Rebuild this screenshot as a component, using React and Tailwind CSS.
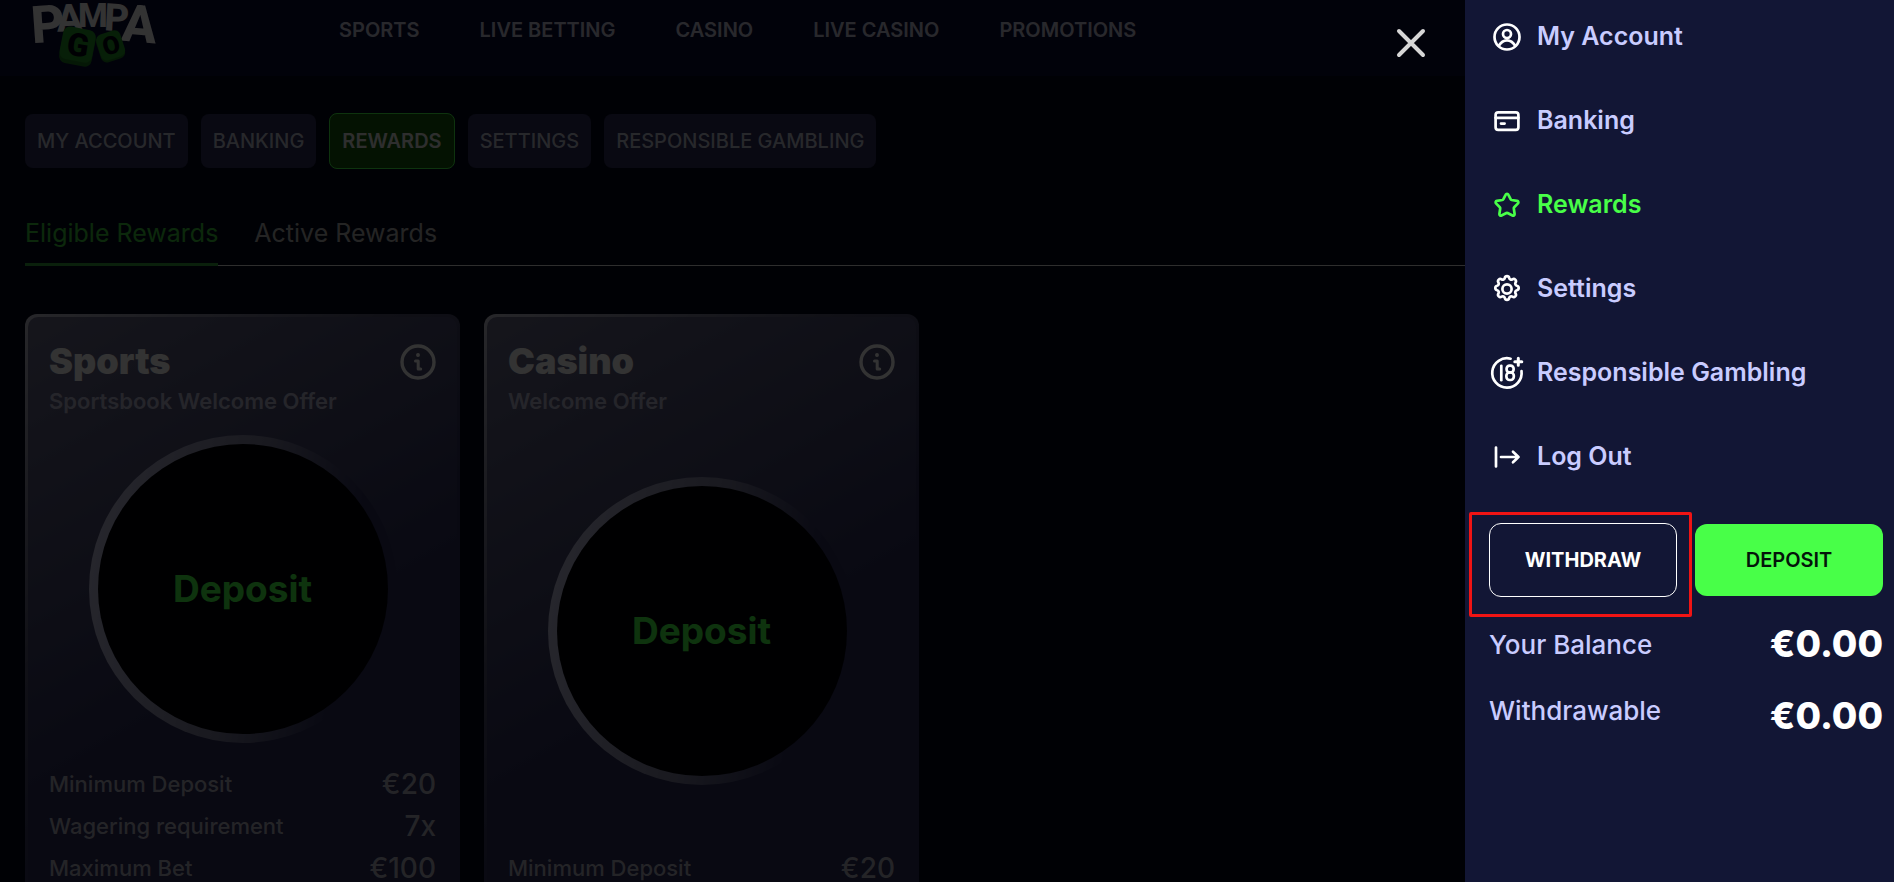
import React from 'react';

const NAV_LINKS = ['SPORTS', 'LIVE BETTING', 'CASINO', 'LIVE CASINO', 'PROMOTIONS'];

const ACCOUNT_TABS = ['MY ACCOUNT', 'BANKING', 'REWARDS', 'SETTINGS', 'RESPONSIBLE GAMBLING'];

const REWARDS = [
  {
    title: 'Sports',
    subtitle: 'Sportsbook Welcome Offer',
    rows: [
      ['Minimum Deposit', '€20'],
      ['Wagering requirement', '7x'],
      ['Maximum Bet', '€100'],
    ],
  },
  {
    title: 'Casino',
    subtitle: 'Welcome Offer',
    rows: [['Minimum Deposit', '€20']],
  },
];

const Icon = ({ children, className = 'size-9' }) => (
  <svg
    viewBox="0 0 36 36"
    className={className}
    fill="none"
    stroke="currentColor"
    strokeWidth="2.7"
    strokeLinecap="round"
    strokeLinejoin="round"
    aria-hidden="true"
  >
    {children}
  </svg>
);

const UserIcon = () => (
  <Icon>
    <circle cx="18" cy="18" r="12.5" />
    <circle cx="18" cy="15" r="4" />
    <path d="M9.8 26.8C11.8 23.4 14.6 21.4 18 21.4s6.2 2 8.2 5.4" />
  </Icon>
);

const CardIcon = () => (
  <Icon>
    <rect x="6.6" y="9.4" width="22.8" height="17.4" rx="2.6" />
    <path d="M6.6 14.8h22.8M12 20.6h3.6" />
  </Icon>
);

const StarIcon = () => (
  <Icon>
    <path d="M16.7 7.6c.5-1.1 2.1-1.1 2.6 0l2.3 4.6c.2.4.6.7 1.1.8l5.4.9c1.3.2 1.7 1.6.9 2.5l-3.8 3.9c-.3.3-.5.8-.4 1.2l.8 5.5c.2 1.2-1 2-2.1 1.5L18.6 26c-.4-.2-.8-.2-1.2 0l-4.9 2.5c-1.1.5-2.3-.3-2.1-1.5l.8-5.5c.1-.4-.1-.9-.4-1.2L7 16.4c-.8-.9-.4-2.3.9-2.5l5.4-.9c.5-.1.9-.4 1.1-.8z" />
  </Icon>
);

const GearIcon = () => (
  <Icon>
    <circle cx="18" cy="18" r="4.6" />
    <path d="M15.8 7c.5-2.4 3.9-2.4 4.4 0 .3 1.5 1.9 2.2 3.2 1.3 2.1-1.3 4.5 1.1 3.2 3.2-.8 1.3-.1 2.9 1.3 3.3 2.4.5 2.4 3.9 0 4.4-1.5.3-2.1 2-1.3 3.3 1.3 2.1-1.1 4.5-3.2 3.2-1.3-.8-2.9-.2-3.2 1.3-.5 2.4-3.9 2.4-4.4 0-.3-1.5-1.9-2.1-3.2-1.3-2.1 1.3-4.5-1.1-3.2-3.2.8-1.3.2-3-1.3-3.3-2.4-.5-2.4-3.9 0-4.4 1.5-.4 2.1-2 1.3-3.3-1.3-2.1 1.1-4.5 3.2-3.2 1.3.9 2.9.2 3.2-1.3z" />
  </Icon>
);

const AgeIcon = () => (
  <Icon>
    <path d="M21.6 3.7A14.7 14.7 0 1 0 32.5 16" />
    <path d="M29.3 3.3v7M25.8 6.8h7" strokeWidth="3" />
    <path d="M12.3 10.8v14.4" />
    <rect x="17.6" y="10.6" width="7" height="6.8" rx="3" />
    <rect x="17.4" y="17.4" width="7.4" height="7.6" rx="3.2" />
  </Icon>
);

const LogoutIcon = () => (
  <Icon>
    <path d="M7 8.6v18.8M12 18h17.5M24 12.8l5.5 5.2-5.5 5.2" />
  </Icon>
);

const MENU = [
  { label: 'My Account', icon: UserIcon },
  { label: 'Banking', icon: CardIcon },
  { label: 'Rewards', icon: StarIcon, active: true },
  { label: 'Settings', icon: GearIcon },
  { label: 'Responsible Gambling', icon: AgeIcon },
  { label: 'Log Out', icon: LogoutIcon },
];

const Logo = () => (
  <svg viewBox="0 0 124 68" className="h-[68px] w-[124px]" role="img" aria-label="Pampa Go">
    <g fill="#ffffff" fontFamily="Roboto, sans-serif" fontWeight="800" textAnchor="middle">
      <text x="17" y="42" fontSize="52" transform="rotate(-4 17 42)">P</text>
      <text x="38" y="31" fontSize="38" transform="rotate(-3 38 31)">A</text>
      <text x="61" y="27" fontSize="34">M</text>
      <text x="84" y="31" fontSize="38" transform="rotate(3 84 31)">P</text>
      <text x="106" y="42" fontSize="52" transform="rotate(5 106 42)">A</text>
    </g>
    <rect x="29" y="30" width="33" height="35" rx="7" fill="#1d7a20" transform="rotate(11 45 47)" />
    <rect x="29" y="28" width="33" height="33" rx="7" fill="#249a28" transform="rotate(11 45 45)" />
    <rect x="66" y="34" width="25" height="27" rx="6" fill="#1d7a20" transform="rotate(-18 78 47)" />
    <rect x="66" y="32" width="25" height="27" rx="6" fill="#249a28" transform="rotate(-18 78 45)" />
    <g fill="#04040f" fontFamily="Roboto, sans-serif" fontWeight="900" textAnchor="middle">
      <text x="46" y="56" fontSize="32" transform="rotate(9 46 45)">G</text>
      <text x="79" y="54" fontSize="25" transform="rotate(-16 79 45)">O</text>
    </g>
  </svg>
);

const Header = () => (
  <header className="flex h-[76px] items-start bg-[#090a35] pl-8">
    <Logo />
    <nav className="ml-[183px] flex gap-[60px] pt-[15px]">
      {NAV_LINKS.map((link) => (
        <a key={link} href="#" className="text-[20px] leading-[30px] font-semibold text-[#c6c7dc]">
          {link}
        </a>
      ))}
    </nav>
  </header>
);

const AccountTabs = () => (
  <nav className="flex items-center gap-[13px]">
    {ACCOUNT_TABS.map((tab) => (
      <a
        key={tab}
        href="#"
        className={
          tab === 'REWARDS'
            ? 'flex h-14 items-center rounded-lg border border-[#48ff48] bg-[#145a0a] px-3 text-[20px] font-semibold text-[#e4e4e4]'
            : 'flex h-[54px] items-center rounded-lg bg-[#2d2d5a] px-3 text-[20px] font-medium text-[#c4c5d6]'
        }
      >
        {tab}
      </a>
    ))}
  </nav>
);

const RewardTabs = () => (
  <div role="tablist" className="flex gap-9 border-b border-[#e4e4e4]">
    <button
      type="button"
      role="tab"
      aria-selected="true"
      className="-mb-px h-[54px] border-b-3 border-[#32a03c] pb-2 text-[25px] text-[#3cc83c]"
    >
      Eligible Rewards
    </button>
    <button
      type="button"
      role="tab"
      aria-selected="false"
      className="-mb-px h-[54px] border-b-3 border-transparent pb-2 text-[25px] text-[#b4b4b4]"
    >
      Active Rewards
    </button>
  </div>
);

const RewardCard = ({ title, subtitle, rows }) => (
  <article className="flex rounded-xl bg-linear-135 from-[#c3c3d2] via-[#50506e] via-35% to-[#2d2d5a] to-60% p-[3px]">
    <div className="flex w-full flex-col rounded-[10px] bg-linear-150 from-[#6c6c8a] to-[#2d2d5a] to-60% px-[21px] py-5">
      <div className="flex items-start justify-between">
        <div>
          <h2 className="text-[36px] leading-[48px] font-black text-white">{title}</h2>
          <p className="text-[22px] leading-[32px] font-semibold text-[#b9b9d2]">{subtitle}</p>
        </div>
        <button type="button" aria-label={`${title} offer details`} className="mt-[7px] text-white">
          <Icon>
            <circle cx="18" cy="18" r="16" strokeWidth="3.4" />
            <circle cx="18" cy="11" r="1.2" fill="currentColor" strokeWidth="1.5" />
            <path d="M15.5 17h2.7v8M18.2 25h2.5" strokeWidth="3" />
          </Icon>
        </button>
      </div>

      <div className="my-auto flex justify-center pt-[18px] pb-5">
        <button
          type="button"
          className="rounded-full bg-linear-100 from-[#c8c8e6] via-[#7d7d9b] via-50% to-[#2d2d5a] to-80% p-[9px]"
        >
          <span className="flex size-[290px] items-center justify-center rounded-full bg-[#020208] text-[37px] font-bold text-[#48ff48]">
            Deposit
          </span>
        </button>
      </div>

      <dl>
        {rows.map(([label, value]) => (
          <div key={label} className="flex h-[42px] items-center justify-between">
            <dt className="text-[22px] font-medium text-[#b4b4c3]">{label}</dt>
            <dd className="text-[28px] font-medium text-[#b4b4c3]">{value}</dd>
          </div>
        ))}
      </dl>
    </div>
  </article>
);

const AccountDrawer = () => (
  <aside className="h-full w-[429px] bg-[#121635] pr-[11px] pl-6">
    <nav className="flex flex-col gap-[10px]">
      {MENU.map(({ label, icon: MenuIcon, active }) => (
        <a
          key={label}
          href="#"
          className={
            active
              ? 'flex h-[74px] items-center gap-3 text-[25px] font-semibold text-[#48ff48]'
              : 'flex h-[74px] items-center gap-3 text-[25px] font-semibold text-[#c9ccff]'
          }
        >
          <span className={active ? 'text-[#48ff48]' : 'text-white'}>
            <MenuIcon />
          </span>
          {label}
        </a>
      ))}
    </nav>

    <div className="mt-[29px] flex items-center gap-[18px]">
      <div className="relative flex-1">
        <button
          type="button"
          className="h-[74px] w-full rounded-xl border border-white text-[20px] font-bold text-white"
        >
          WITHDRAW
        </button>
        <div className="pointer-events-none absolute -top-[11px] -right-[15px] -bottom-5 -left-5 rounded-xs border-3 border-[#f01414]" />
      </div>
      <button
        type="button"
        className="h-[72px] flex-1 rounded-xl bg-[#48ff48] text-[20px] font-semibold text-[#04140a]"
      >
        DEPOSIT
      </button>
    </div>

    <div className="mt-[11px] flex justify-between">
      <div className="pt-1 text-[26px] leading-[66px] font-medium text-[#c9ccff]">
        <p>Your Balance</p>
        <p>Withdrawable</p>
      </div>
      <div className="text-right text-[37px] leading-[72px] font-extrabold text-white">
        <p>€0.00</p>
        <p>€0.00</p>
      </div>
    </div>
  </aside>
);

const App = () => {
  return (
    <div className="h-screen overflow-hidden bg-[#04081a] font-['Inter',sans-serif]">
      <Header />

      <main className="px-[25px] pt-[37px]">
        <AccountTabs />
        <div className="pt-[43px]">
          <RewardTabs />
        </div>
        <section className="grid grid-cols-[repeat(auto-fill,435px)] gap-6 pt-12">
          {REWARDS.map((reward) => (
            <RewardCard key={reward.title} {...reward} />
          ))}
        </section>
      </main>

      <div className="fixed inset-0 flex items-start justify-end bg-black/80">
        <button type="button" aria-label="Close menu" className="mt-[25px] mr-9 text-[#d6d6d6]">
          <Icon>
            <path d="M6 6l24 24M30 6L6 30" strokeWidth="4" />
          </Icon>
        </button>
        <AccountDrawer />
      </div>
    </div>
  );
};

export default App;
